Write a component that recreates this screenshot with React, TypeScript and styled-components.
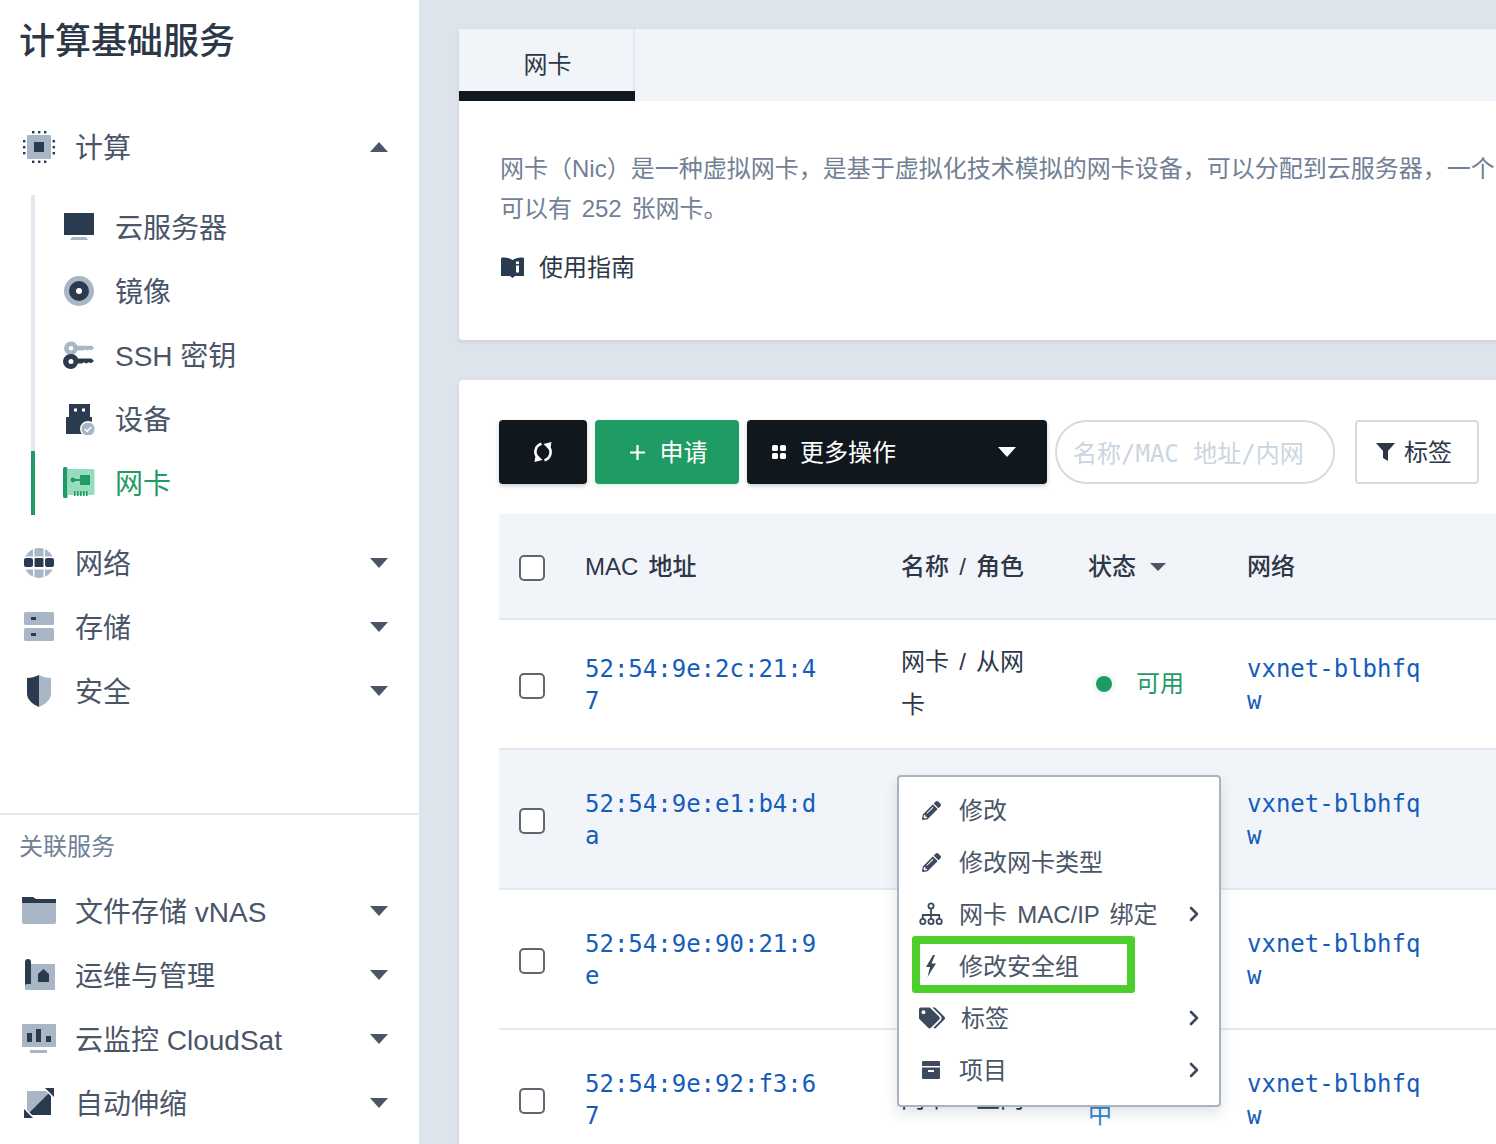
import * as React from "react";
import { FC, ReactNode } from "react";
import styled, { createGlobalStyle } from "styled-components";
import { FaPencilAlt, FaTags } from "react-icons/fa";
import { ChevronRight } from "lucide-react";

const DARK = "#2a3a4f";
const LIGHT = "#a9b6c6";
const GREEN = "#1f9c64";

const GlobalStyle = createGlobalStyle`
  html, body {
    margin: 0;
    padding: 0;
    background: #dde4ec;
    font-family: "Liberation Sans", "Noto Sans CJK SC", sans-serif;
    color: #4a5568;
  }
  * { box-sizing: border-box; }
`;

const Page = styled.div`
  display: flex;
  width: 1496px;
  height: 1144px;
  overflow: hidden;
`;

const Sidebar = styled.aside`
  flex: 0 0 419px;
  background: #fff;
`;

const Title = styled.h1`
  margin: 0;
  height: 115px;
  padding: 2px 0 0 19px;
  font-size: 36px;
  line-height: 80px;
  font-weight: 500;
  color: #2d3748;
`;

const NavRow = styled.div`
  display: flex;
  align-items: center;
  gap: 20px;
  height: 64px;
  padding: 0 31px 0 23px;
  font-size: 28px;
`;

const NavLabel = styled.span`
  flex: 1;
  padding-bottom: 2px;
`;

const SubList = styled.div`
  margin: 16px 0 16px 31px;
`;

const SubRow = styled.div<{ $active?: boolean }>`
  display: flex;
  align-items: center;
  gap: 20px;
  height: 64px;
  padding-left: 28px;
  font-size: 28px;
  border-left: 4px solid ${props => (props.$active ? GREEN : "#e2e8f0")};
  color: ${props => (props.$active ? GREEN : "#4a5568")};
`;

const Caret = styled.i<{ $up?: boolean; $color?: string; $w?: number }>`
  display: block;
  flex: none;
  width: 0;
  height: 0;
  border-left: ${props => (props.$w || 18) / 2}px solid transparent;
  border-right: ${props => (props.$w || 18) / 2}px solid transparent;
  ${props => (props.$up ? "border-bottom" : "border-top")}: ${props =>
    ((props.$w || 18) * 5) / 9}px solid ${props => props.$color || "#4a5568"};
`;

const HeadCaret = styled(Caret)`
  margin-top: 5px;
`;

const Related = styled.section`
  margin-top: 90px;
  border-top: 2px solid #e2e8f0;
`;

const RelatedTitle = styled.div`
  height: 64px;
  padding-left: 19px;
  font-size: 24px;
  line-height: 64px;
  color: #718096;
`;

const Main = styled.main`
  flex: 1;
  min-width: 0;
  padding: 29px 0 0 40px;
`;

const Card = styled.section`
  position: relative;
  width: 1200px;
  background: #fff;
  border-radius: 4px;
  box-shadow: 0 2px 4px rgba(45, 55, 72, 0.12);
`;

const TabBar = styled.div`
  height: 72px;
  background: #f1f5f9;
`;

const Tab = styled.div`
  width: 176px;
`;

const TabLabel = styled.div`
  height: 62px;
  padding-left: 3px;
  border-right: 2px solid #e2e8f0;
  font-size: 24px;
  line-height: 72px;
  text-align: center;
  color: #2d3748;
`;

const TabMark = styled.div`
  height: 10px;
  background: #10171d;
`;

const Intro = styled.div`
  padding: 48px 0 52px 41px;
`;

const IntroLine = styled.p`
  margin: 0;
  font-size: 24px;
  line-height: 40px;
  white-space: nowrap;
  word-spacing: 3px;
  color: #718096;
`;

const GuideLink = styled.div`
  display: flex;
  align-items: center;
  gap: 15px;
  margin-top: 19px;
  padding-left: 1px;
  font-size: 24px;
  line-height: 40px;
  color: #2d3748;
`;

const ListCard = styled(Card)`
  margin-top: 40px;
  padding: 40px;
  height: 800px;
`;

const Toolbar = styled.div`
  display: flex;
  gap: 8px;
  height: 64px;
  margin-bottom: 30px;
`;

const ActionButton = styled.button<{ $width: number; $green?: boolean }>`
  display: flex;
  align-items: center;
  justify-content: center;
  gap: 15px;
  width: ${props => props.$width}px;
  padding: 0 0 0 ${props => (props.$green ? 3 : 0)}px;
  border: 0;
  border-radius: 4px;
  background: ${props => (props.$green ? GREEN : "#10171d")};
  box-shadow: 0 2px 4px ${props => (props.$green ? "rgba(31,156,100,.15)" : "rgba(45,55,72,.25)")};
  font: inherit;
  font-size: 24px;
  color: #fff;
`;

const ButtonText = styled.span`
  padding-bottom: 4px;
`;

const MoreButton = styled(ActionButton)`
  justify-content: flex-start;
  gap: 14px;
  padding: 0 31px 0 25px;
`;

const MoreLabel = styled(ButtonText)`
  flex: 1;
  text-align: left;
`;

const Search = styled.input`
  width: 280px;
  padding: 3px 16px 0;
  border: 2px solid #d5dbe5;
  border-radius: 32px;
  outline: none;
  font-family: "DejaVu Sans Mono", "Noto Sans CJK SC", monospace;
  font-size: 24px;

  &::placeholder {
    color: #cbd5e0;
    opacity: 1;
  }
`;

const TagButton = styled.button`
  display: flex;
  align-items: center;
  justify-content: center;
  gap: 8px;
  width: 124px;
  margin-left: 12px;
  padding: 0 6px 0 0;
  background: #fff;
  border: 2px solid #d5dbe5;
  border-radius: 4px;
  font: inherit;
  font-size: 24px;
  color: #2d3748;
`;

const TableRow = styled.div<{ $head?: boolean; $hover?: boolean; $height: number }>`
  display: grid;
  grid-template-columns: 86px 316px 187px 159px 260px;
  align-items: center;
  height: ${props => props.$height}px;
  border-bottom: 2px solid #e2e8f0;
  background: ${props => (props.$head || props.$hover ? "#f1f5f9" : "#fff")};
`;

const HeadCell = styled.div`
  display: flex;
  align-items: center;
  gap: 14px;
  padding-bottom: 4px;
  font-size: 24px;
  font-weight: 500;
  word-spacing: 3.5px;
  color: #2d3748;
`;

const CheckCell = styled.div`
  padding: 3px 0 0 20px;
`;

const Check = styled.span`
  display: block;
  width: 26px;
  height: 26px;
  background: #fff;
  border: 2px solid #5f6670;
  border-radius: 5px;
`;

const MonoLink = styled.a<{ $width: number }>`
  display: block;
  width: ${props => props.$width}px;
  padding-top: 2px;
  font-family: "DejaVu Sans Mono", monospace;
  font-size: 24px;
  line-height: 32px;
  word-break: break-all;
  color: #155cbb;
`;

const NameCell = styled.div`
  width: 130px;
  padding-bottom: 2px;
  font-size: 24px;
  line-height: 43px;
  word-spacing: 3.5px;
  color: #2d3748;
`;

const Status = styled.div<{ $color: string }>`
  display: flex;
  align-items: center;
  gap: 24px;
  font-size: 24px;
  line-height: 32px;
  color: ${props => props.$color};
`;

const StatusDot = styled.span`
  width: 16px;
  height: 16px;
  margin-left: 8px;
  border-radius: 50%;
  background: ${GREEN};
  box-shadow: 0 0 0 4px rgba(31, 156, 100, 0.06);
`;

const PendingText = styled.div`
  width: 50px;
`;

const Menu = styled.div`
  position: absolute;
  left: 438px;
  top: 395px;
  width: 324px;
  height: 332px;
  padding: 7px 0;
  background: #fff;
  border: 2px solid #a9b3c0;
  border-radius: 4px;
  box-shadow: 0 6px 14px rgba(45, 55, 72, 0.14);
`;

const MenuItem = styled.div`
  display: flex;
  align-items: center;
  gap: 16px;
  height: 52px;
  padding: 0 13px 0 20px;
  font-size: 24px;
  color: #4a5568;

  svg {
    flex: none;
  }
`;

const MenuIcon = styled.span`
  display: flex;
  justify-content: center;
  flex: none;
  min-width: 24px;
  color: #3c4a5c;
`;

const MenuLabel = styled.span`
  flex: 1;
  padding-bottom: 4px;
  white-space: nowrap;
  word-spacing: 3.5px;
`;

const Highlight = styled.div`
  position: absolute;
  left: 13px;
  top: 159px;
  width: 223px;
  height: 57px;
  border: 8px solid #4ccf2b;
  border-radius: 3px;
`;

const Glyph = styled.svg<{ $wide?: boolean }>`
  flex: none;
  margin: 0 ${props => (props.$wide ? -1 : 0)}px;
`;

const Icon: FC<{ w?: number; h?: number; children: ReactNode }> = ({ w = 32, h = 32, children }) => (
  <Glyph $wide={w > 32} width={w} height={h} viewBox={`0 0 ${w} ${h}`}>
    {children}
  </Glyph>
);

const ChipIcon = () => (
  <Icon>
    <rect x="4" y="4" width="24" height="24" rx="1" fill={LIGHT} />
    <rect x="11" y="11" width="10" height="10" fill={DARK} />
    {[9, 15, 21].map(p => (
      <React.Fragment key={p}>
        <rect x={p} y="0" width="2.4" height="2.4" fill={DARK} />
        <rect x={p} y="29.6" width="2.4" height="2.4" fill={DARK} />
        <rect x="0" y={p} width="2.4" height="2.4" fill={DARK} />
        <rect x="29.6" y={p} width="2.4" height="2.4" fill={DARK} />
      </React.Fragment>
    ))}
  </Icon>
);

const MonitorIcon = () => (
  <Icon>
    <path d="M9 26h14l2 3H7z" fill={LIGHT} />
    <rect x="1" y="2" width="30" height="22" fill={DARK} />
  </Icon>
);

const DiscIcon = () => (
  <Icon>
    <circle cx="16" cy="16" r="15" fill={LIGHT} />
    <circle cx="16" cy="16" r="10" fill={DARK} />
    <circle cx="16" cy="16" r="3" fill="#fff" />
  </Icon>
);

const KeysIcon = () => (
  <Icon>
    <path fillRule="evenodd" d="M8 2.500a6.800 6.800 0 0 1 6.300 4.300H29l2 2.500-3 2.200-2-1-2 1-2-1-2 1h-5.700A6.800 6.800 0 1 1 8 2.500zm0 4.500a2.300 2.300 0 1 0 0 4.600 2.300 2.300 0 0 0 0-4.600z" fill={LIGHT} />
    <path fillRule="evenodd" d="M8 15a7.500 7.500 0 0 1 7 4.500H28.500l2.500 2.500-3 2.200-2-1-3 1.300-2-1.300-2 1.300h-4.200A7.500 7.500 0 1 1 8 15zm0 5a2.500 2.500 0 1 0 0 5 2.500 2.500 0 0 0 0-5z" fill={DARK} />
  </Icon>
);

const UsbIcon = () => (
  <Icon>
    <path d="M6 1h21v13h2v17H3V14h3z" fill={DARK} />
    <rect x="11" y="5.500" width="3" height="3" fill="#fff" />
    <rect x="19" y="5.500" width="3" height="3" fill="#fff" />
    <circle cx="25" cy="26" r="8" fill="#fff" />
    <circle cx="25" cy="26" r="6.6" fill={LIGHT} />
    <path d="M21.800 26l2.300 2.300 4-4" fill="none" stroke="#fff" strokeWidth="1.6" />
  </Icon>
);

const NicIcon = () => (
  <Icon>
    <rect x="0" y="0" width="4.5" height="31" rx="1.5" fill={GREEN} />
    <rect x="4.5" y="2" width="27" height="26" rx="1" fill="#98dcc0" />
    <rect x="17" y="8" width="10" height="10" fill={GREEN} />
    <circle cx="10" cy="13" r="2.4" fill={GREEN} />
    <rect x="10" y="12" width="8" height="2" fill={GREEN} />
    {[11, 14, 17, 20, 23].map(x => (
      <rect key={x} x={x} y="24" width="1.6" height="5" fill={GREEN} />
    ))}
  </Icon>
);

const GlobeIcon = () => (
  <Icon>
    <circle cx="16" cy="16" r="15" fill={LIGHT} />
    <rect x="10" y="0" width="1.4" height="32" fill="#fff" />
    <rect x="20.600" y="0" width="1.4" height="32" fill="#fff" />
    <rect x="0" y="9.500" width="32" height="13" fill="#fff" />
    <rect x="1" y="11" width="9" height="9" rx="2" fill={DARK} />
    <rect x="11.500" y="11" width="9" height="9" rx="1" fill={DARK} />
    <rect x="22" y="11" width="9" height="9" rx="2" fill={DARK} />
  </Icon>
);

const StorageIcon = () => (
  <Icon>
    <rect x="1" y="1" width="30" height="13" rx="1.5" fill={LIGHT} />
    <rect x="1" y="17" width="30" height="13" rx="1.5" fill={LIGHT} />
    <rect x="8" y="6" width="5" height="3" fill={DARK} />
    <rect x="8" y="22" width="5" height="3" fill={DARK} />
  </Icon>
);

const ShieldIcon = () => (
  <Icon>
    <path d="M16 0C12 2 8 3 4 3v16c0 5 5 10 12 13z" fill={DARK} />
    <path d="M16 0c4 2 8 3 12 3v16c0 5-5 10-12 13z" fill={LIGHT} />
  </Icon>
);

const FolderIcon = () => (
  <Icon w={34} h={28}>
    <path d="M0 5h34v20a2 2 0 0 1-2 2H2a2 2 0 0 1-2-2z" fill={LIGHT} />
    <path d="M0 0h11l3 2h20v4H0z" fill={DARK} />
  </Icon>
);

const OpsIcon = () => (
  <Icon>
    <rect x="2" y="5" width="30" height="26" fill={LIGHT} />
    <path d="M2 3a3 3 0 0 1 6 0v22H4a2 2 0 0 0-2 2z" fill={DARK} />
    <path d="M15 15l5.500-5 5.500 5v8H15z" fill={DARK} />
  </Icon>
);

const ChartIcon = () => (
  <Icon w={34} h={30}>
    <rect x="0" y="0" width="34" height="23" fill={LIGHT} />
    <rect x="8" y="26" width="17" height="3" fill={LIGHT} />
    <rect x="5" y="9" width="5" height="9" fill={DARK} />
    <rect x="14" y="5" width="5" height="13" fill={DARK} />
    <rect x="24" y="12" width="5" height="6" fill={DARK} />
  </Icon>
);

const ScaleIcon = () => (
  <Icon>
    <rect x="4" y="4" width="24" height="24" fill={LIGHT} />
    <path d="M28 4v24H4z" fill={DARK} />
    <path d="M19 0h13v13z" fill="#fff" />
    <path d="M22 1h9v9z" fill={DARK} />
    <path d="M0 19v13h13z" fill="#fff" />
    <path d="M1 22v9h9z" fill={DARK} />
  </Icon>
);

const BookIcon = () => (
  <Icon w={23} h={22}>
    <path d="M0 1c4-1 8 0 11.500 2C15 1 19 0 23 1v18h-9l-2.500 2L9 19H0z" fill={DARK} />
    <rect x="15" y="8.500" width="3" height="7" fill="#fff" />
    <rect x="15" y="4.500" width="3" height="2.600" fill="#fff" />
  </Icon>
);

const SyncIcon = () => (
  <svg width="20" height="20" viewBox="0 0 20 20" fill="none" stroke="#fff" strokeWidth="2.6">
    <path d="M8.500 1.800A8.200 8.200 0 0 0 4.800 15.500" />
    <path d="M11.500 18.200A8.200 8.200 0 0 0 15.200 4.500" />
    <path d="M1.500 20l8-2-6.500-6.500z" fill="#fff" stroke="none" />
    <path d="M18.500 0l-8 2 6.500 6.500z" fill="#fff" stroke="none" />
  </svg>
);

const GridIcon = () => (
  <svg width="14" height="14" viewBox="0 0 14 14" fill="#fff">
    <rect x="0" y="0" width="6" height="6" rx="1.6" />
    <rect x="8" y="0" width="6" height="6" rx="1.6" />
    <rect x="0" y="8" width="6" height="6" rx="1.6" />
    <rect x="8" y="8" width="6" height="6" rx="1.6" />
  </svg>
);

const PlusIcon = () => (
  <svg width="15" height="15" viewBox="0 0 15 15" stroke="#fff" strokeWidth="2.2">
    <path d="M7.500 0v15M0 7.500h15" />
  </svg>
);

const FunnelIcon = () => (
  <svg width="20" height="20" viewBox="0 0 20 20" fill="#2d3748">
    <path d="M0 1h19l-7 8v10l-5-3V9z" />
  </svg>
);

const SitemapIcon = () => (
  <svg width="24" height="24" viewBox="0 0 24 24" fill="none" stroke="#3c4a5c" strokeWidth="1.8">
    <circle cx="12" cy="4" r="2.6" />
    <circle cx="3.800" cy="19.500" r="2.6" />
    <circle cx="12" cy="19.500" r="2.600" />
    <circle cx="20.200" cy="19.500" r="2.6" />
    <path d="M12 6.500v10.500M3.800 17v-4h16.400v4" />
  </svg>
);

const BoltIcon = () => (
  <svg width="12" height="22" viewBox="0 0 12 22" fill="#3c4a5c">
    <path d="M8 0L1 12h4L2.500 22 11 8.500H6.500L10 0z" />
  </svg>
);

const BoxIcon = () => (
  <svg width="20" height="20" viewBox="0 0 20 20" fill="#3c4a5c">
    <path d="M1 2a1 1 0 0 1 1-1h16a1 1 0 0 1 1 1v4H1z" />
    <path fillRule="evenodd" d="M1 7.500h18V18a1 1 0 0 1-1 1H2a1 1 0 0 1-1-1zM7 10v2h6v-2z" />
  </svg>
);

const computeItems = [
  { icon: <MonitorIcon />, label: "云服务器" },
  { icon: <DiscIcon />, label: "镜像" },
  { icon: <KeysIcon />, label: "SSH 密钥" },
  { icon: <UsbIcon />, label: "设备" },
  { icon: <NicIcon />, label: "网卡", active: true }
];

const mainNav = [
  { icon: <GlobeIcon />, label: "网络" },
  { icon: <StorageIcon />, label: "存储" },
  { icon: <ShieldIcon />, label: "安全" }
];

const relatedNav = [
  { icon: <FolderIcon />, label: "文件存储 vNAS" },
  { icon: <OpsIcon />, label: "运维与管理" },
  { icon: <ChartIcon />, label: "云监控 CloudSat" },
  { icon: <ScaleIcon />, label: "自动伸缩" }
];

const rows = [
  { mac: "52:54:9e:2c:21:47", name: "网卡 / 从网卡", height: 130 },
  { mac: "52:54:9e:e1:b4:da", name: "网卡 / 主网卡", height: 140, hover: true },
  { mac: "52:54:9e:90:21:9e", name: "网卡 / 主网卡", height: 140 },
  { mac: "52:54:9e:92:f3:67", name: "网卡 / 主网", height: 140, pending: true }
];

const menuItems = [
  { icon: <FaPencilAlt size={19} />, label: "修改" },
  { icon: <FaPencilAlt size={19} />, label: "修改网卡类型" },
  { icon: <SitemapIcon />, label: "网卡 MAC/IP 绑定", more: true },
  { icon: <BoltIcon />, label: "修改安全组" },
  { icon: <FaTags size={26} />, label: "标签", more: true },
  { icon: <BoxIcon />, label: "项目", more: true }
];

const App: FC = () => (
  <Page>
    <GlobalStyle />
    <Sidebar>
      <Title>计算基础服务</Title>
      <NavRow>
        <ChipIcon />
        <NavLabel>计算</NavLabel>
        <Caret $up />
      </NavRow>
      <SubList>
        {computeItems.map(item => (
          <SubRow key={item.label} $active={item.active}>
            {item.icon}
            <NavLabel>{item.label}</NavLabel>
          </SubRow>
        ))}
      </SubList>
      {mainNav.map(item => (
        <NavRow key={item.label}>
          {item.icon}
          <NavLabel>{item.label}</NavLabel>
          <Caret />
        </NavRow>
      ))}
      <Related>
        <RelatedTitle>关联服务</RelatedTitle>
        {relatedNav.map(item => (
          <NavRow key={item.label}>
            {item.icon}
            <NavLabel>{item.label}</NavLabel>
            <Caret />
          </NavRow>
        ))}
      </Related>
    </Sidebar>
    <Main>
      <Card>
        <TabBar>
          <Tab>
            <TabLabel>网卡</TabLabel>
            <TabMark />
          </Tab>
        </TabBar>
        <Intro>
          <IntroLine>网卡（Nic）是一种虚拟网卡，是基于虚拟化技术模拟的网卡设备，可以分配到云服务器，一个</IntroLine>
          <IntroLine>可以有 252 张网卡。</IntroLine>
          <GuideLink>
            <BookIcon />
            使用指南
          </GuideLink>
        </Intro>
      </Card>
      <ListCard>
        <Toolbar>
          <ActionButton $width={88} aria-label="刷新">
            <SyncIcon />
          </ActionButton>
          <ActionButton $width={144} $green>
            <PlusIcon />
            <ButtonText>申请</ButtonText>
          </ActionButton>
          <MoreButton $width={300}>
            <GridIcon />
            <MoreLabel>更多操作</MoreLabel>
            <Caret $color="#fff" />
          </MoreButton>
          <Search placeholder="名称/MAC 地址/内网" />
          <TagButton>
            <FunnelIcon />
            <ButtonText>标签</ButtonText>
          </TagButton>
        </Toolbar>
        <TableRow $head $height={106}>
          <CheckCell>
            <Check />
          </CheckCell>
          <HeadCell>MAC 地址</HeadCell>
          <HeadCell>名称 / 角色</HeadCell>
          <HeadCell>
            状态
            <HeadCaret $w={16} />
          </HeadCell>
          <HeadCell>网络</HeadCell>
        </TableRow>
        {rows.map(row => (
          <TableRow key={row.mac} $height={row.height} $hover={row.hover}>
            <CheckCell>
              <Check />
            </CheckCell>
            <MonoLink $width={240}>{row.mac}</MonoLink>
            <NameCell>{row.name}</NameCell>
            {row.pending ? (
              <Status $color="#3182ce">
                <PendingText>绑定中</PendingText>
              </Status>
            ) : (
              <Status $color={GREEN}>
                <StatusDot />
                可用
              </Status>
            )}
            <MonoLink $width={180}>vxnet-blbhfqw</MonoLink>
          </TableRow>
        ))}
        <Menu>
          {menuItems.map(item => (
            <MenuItem key={item.label}>
              <MenuIcon>{item.icon}</MenuIcon>
              <MenuLabel>{item.label}</MenuLabel>
              {item.more && <ChevronRight size={24} strokeWidth={2.6} color="#3c4a5c" />}
            </MenuItem>
          ))}
          <Highlight />
        </Menu>
      </ListCard>
    </Main>
  </Page>
);

export default App;
